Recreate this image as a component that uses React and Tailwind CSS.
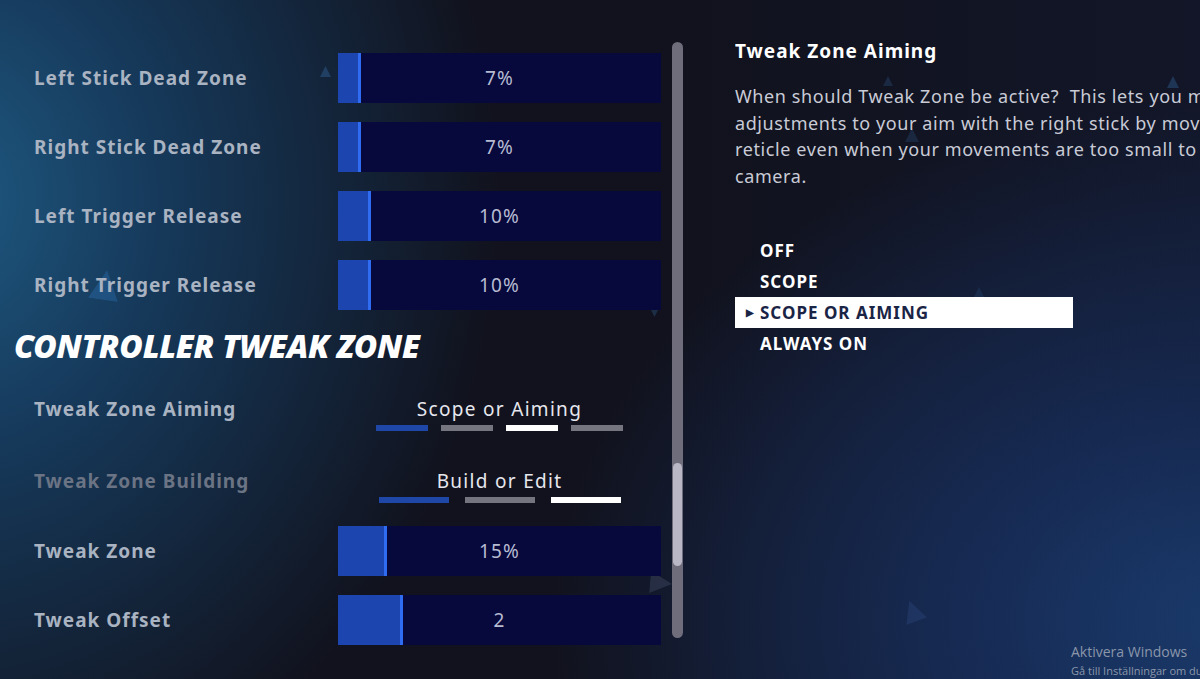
import React from "react";

const F = { fontFamily: '"Noto Sans", "Open Sans", sans-serif' };

function Row({ label, value, fill, mt = "", dim }) {
  return (
    <div className={`flex items-center h-[50px] ${mt}`}>
      <div className={`w-[338px] pl-[34px] text-[19px] font-bold tracking-[1px] ${dim ? "text-[#6f7988]" : "text-[#a9b3c1]"}`} style={F}>{label}</div>
      <div className="relative w-[323px] h-[50px] bg-[#07083c] flex items-center justify-center">
        <div className="absolute left-0 top-0 h-full bg-[#1c45b0] border-r-[3px] border-[#2f6cf2]" style={{ width: fill }} />
        <span className="relative text-[19px] tracking-[1.2px] text-[#b6bbd2]" style={F}>{value}</span>
      </div>
    </div>
  );
}

function Selector({ label, value, segs, mt, dim, segW, gap }) {
  return (
    <div className={`flex items-start ${mt}`}>
      <div className={`w-[338px] pl-[34px] h-[26px] leading-[26px] text-[19px] font-bold tracking-[1px] ${dim ? "text-[#6b7484]" : "text-[#a9b3c1]"}`} style={F}>{label}</div>
      <div className="w-[323px] flex flex-col items-center">
        <div className="h-[26px] leading-[26px] text-[19px] tracking-[1.3px] text-[#e6e7ee]" style={F}>{value}</div>
        <div className={`flex mt-[3px] ${gap}`}>
          {segs.map((c, i) => (
            <div key={i} className={`${segW} h-[6px] ${c}`} />
          ))}
        </div>
      </div>
    </div>
  );
}

function Tri({ x, y, s = 14, r = 0, o = 0.25, c = "#3f7fc0" }) {
  return (
    <svg className="absolute" style={{ left: x, top: y, transform: `rotate(${r}deg)`, opacity: o }} width={s} height={s} viewBox="0 0 10 10">
      <polygon points="5,0 10,10 0,10" fill={c} />
    </svg>
  );
}

export default function App() {
  return (
    <div className="relative w-[1200px] h-[679px] overflow-hidden bg-[#11121d]" style={F}>
      <div className="absolute inset-0 bg-[radial-gradient(ellipse_560px_640px_at_-60px_200px,#1f5a82_0%,#163a5c_38%,rgba(17,18,29,0)_100%)]" />
      <div className="absolute inset-0 bg-[radial-gradient(ellipse_700px_520px_at_1250px_620px,#1d4a86_0%,#172e5a_40%,rgba(17,18,29,0)_100%)]" />
      <div className="absolute inset-0 bg-[linear-gradient(90deg,rgba(0,0,0,0)_0%,rgba(0,0,0,0)_55%,rgba(20,30,60,0.35)_100%)]" />

      <Tri x={320} y={66} s={11} o={0.3} />
      <Tri x={90} y={270} s={30} r={8} o={0.45} c="#2a6aa8" />
      <Tri x={650} y={308} s={9} r={180} o={0.25} />
      <Tri x={650} y={572} s={22} r={95} o={0.18} c="#8090b0" />
      <Tri x={902} y={600} s={22} r={-20} o={0.22} c="#4060a0" />
      <Tri x={1167} y={76} s={12} o={0.3} />
      <Tri x={883} y={76} s={10} o={0.2} />
      <Tri x={905} y={128} s={14} o={0.18} />
      <Tri x={972} y={287} s={14} o={0.15} />

      <div className="relative flex h-full">
        <div className="w-[672px] pt-[53px] flex flex-col">
          <Row label="Left Stick Dead Zone" value="7%" fill={23} />
          <Row label="Right Stick Dead Zone" value="7%" fill={23} mt="mt-[19px]" />
          <Row label="Left Trigger Release" value="10%" fill={33} mt="mt-[19px]" />
          <Row label="Right Trigger Release" value="10%" fill={33} mt="mt-[19px]" />
          <div className="mt-[21px] pl-[14px] h-[30px] leading-[30px] text-[32px] font-black italic text-white tracking-[-0.3px] whitespace-nowrap" style={F}>
            CONTROLLER TWEAK ZONE
          </div>
          <Selector
            label="Tweak Zone Aiming"
            value="Scope or Aiming"
            segs={["bg-[#1f47a8]", "bg-[#75757f]", "bg-white", "bg-[#75757f]"]}
            mt="mt-[35px]"
            segW="w-[52px]"
            gap="gap-[13px]"
          />
          <Selector
            label="Tweak Zone Building"
            value="Build or Edit"
            segs={["bg-[#1f47a8]", "bg-[#75757f]", "bg-white"]}
            mt="mt-[37px]"
            dim
            segW="w-[70px]"
            gap="gap-[16px]"
          />
          <Row label="Tweak Zone" value="15%" fill={49} mt="mt-[23px]" />
          <Row label="Tweak Offset" value="2" fill={65} mt="mt-[19px]" />
        </div>

        <div className="pt-[42px] w-[63px]">
          <div className="relative w-[11px] h-[596px] rounded-full bg-[#6f6c7b]">
            <div className="absolute left-[1px] right-[1px] top-[421px] h-[103px] rounded-full bg-[#b9b7c5]" />
          </div>
        </div>

        <div className="flex-1 pt-[38px] overflow-hidden">
          <div className="text-[19px] font-bold tracking-[1px] text-white leading-[26px]" style={F}>Tweak Zone Aiming</div>
          <div className="mt-[19px] w-[560px] text-[18px] tracking-[0.6px] leading-[26.7px] text-[#c9cbd6]" style={F}>
            <div className="whitespace-nowrap">When should Tweak Zone be active?&nbsp; This lets you make fine</div>
            <div className="whitespace-nowrap">adjustments to your aim with the right stick by moving the</div>
            <div className="whitespace-nowrap">reticle even when your movements are too small to move the</div>
            <div className="whitespace-nowrap">camera.</div>
          </div>
          <div className="mt-[45px] w-[338px] flex flex-col text-[17px] font-bold tracking-[1px]" style={F}>
            <div className="h-[31px] leading-[31px] pl-[25px] text-white">OFF</div>
            <div className="h-[31px] leading-[31px] pl-[25px] text-white">SCOPE</div>
            <div className="h-[31px] leading-[31px] bg-white text-[#1a2445] flex items-center">
              <span className="w-[25px] pl-[11px] text-[10px] text-[#1a2445]">▶</span>
              <span>SCOPE OR AIMING</span>
            </div>
            <div className="h-[31px] leading-[31px] pl-[25px] text-white">ALWAYS ON</div>
          </div>
        </div>
      </div>

      <div className="absolute left-[1071px] top-[643px] text-[14px] leading-[18px] text-[#8a96aa] whitespace-nowrap" style={{ fontFamily: '"Open Sans", sans-serif' }}>
        Aktivera Windows
      </div>
      <div className="absolute left-[1071px] top-[663px] text-[11px] leading-[16px] text-[#8a96aa] whitespace-nowrap" style={{ fontFamily: '"Open Sans", sans-serif' }}>
        Gå till Inställningar om du vill aktivera Windows.
      </div>
    </div>
  );
}
